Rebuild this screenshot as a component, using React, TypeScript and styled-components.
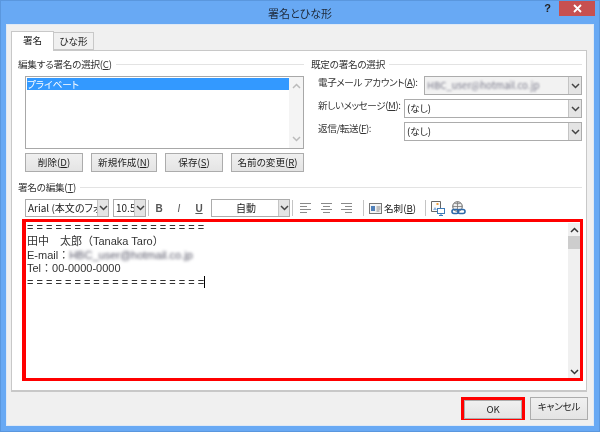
import styled, { createGlobalStyle } from "styled-components";

const UI_FONT = `"Noto Sans CJK JP", "Liberation Sans", sans-serif`;

const GlobalStyle = createGlobalStyle`
  html, body {
    margin: 0;
    padding: 0;
    background: #68a9f4;
  }
  * {
    box-sizing: border-box;
  }
`;

function Chevron({ dir = "down", color = "#444" }: { dir?: "up" | "down"; color?: string }) {
  return (
    <svg width="9" height="6" viewBox="0 0 9 6">
      <path
        d={dir === "down" ? "M1 1l3.5 3.5L8 1" : "M1 5l3.5-3.5L8 5"}
        fill="none"
        stroke={color}
        strokeWidth="1.5"
      />
    </svg>
  );
}

function Combo({
  value,
  width,
  blurred,
  center,
  tight,
}: {
  value: string;
  width: number;
  blurred?: boolean;
  center?: boolean;
  tight?: boolean;
}) {
  return (
    <ComboBox $width={width} $tight={tight} $disabled={blurred}>
      <ComboValue $blurred={blurred} $center={center} $tight={tight}>
        {value}
      </ComboValue>
      <ComboArrow $tight={tight}>
        <Chevron />
      </ComboArrow>
    </ComboBox>
  );
}

function AlignIcon({ kind }: { kind: "left" | "center" | "right" }) {
  const widths = [11, 7, 11, 7];
  return (
    <svg width="11" height="10" viewBox="0 0 11 10">
      {widths.map((w, i) => (
        <rect
          key={i}
          x={kind === "left" ? 0 : kind === "center" ? (11 - w) / 2 : 11 - w}
          y={i * 3}
          width={w}
          height="1"
          fill="#8a8a8a"
        />
      ))}
    </svg>
  );
}

function App() {
  return (
    <>
      <GlobalStyle />
      <Frame>
        <TitleBar>
          <Title>署名とひな形</Title>
          <HelpButton>?</HelpButton>
          <CloseButton>
            <svg width="9" height="9" viewBox="0 0 9 9">
              <path d="M1 1l7 7M8 1L1 8" stroke="#fff" strokeWidth="1.8" />
            </svg>
          </CloseButton>
        </TitleBar>

        <Client>
          <TabRow>
            <Tab $active>署名</Tab>
            <Tab>ひな形</Tab>
          </TabRow>

          <Page>
            <TopRow>
              <LeftGroup>
                <GroupLabel>
                  <span>
                    編集する署名の選択(<u>C</u>)
                  </span>
                </GroupLabel>
                <ListBox>
                  <ListItems>
                    <ListItem>プライベート</ListItem>
                  </ListItems>
                  <ListScroll>
                    <Chevron dir="up" color="#bbb" />
                    <Chevron color="#bbb" />
                  </ListScroll>
                </ListBox>
                <ButtonRow>
                  <PushButton $width={58}>
                    削除(<u>D</u>)
                  </PushButton>
                  <PushButton $width={66}>
                    新規作成(<u>N</u>)
                  </PushButton>
                  <PushButton $width={58}>
                    保存(<u>S</u>)
                  </PushButton>
                  <PushButton $width={73}>
                    名前の変更(<u>R</u>)
                  </PushButton>
                </ButtonRow>
              </LeftGroup>

              <RightGroup>
                <GroupLabel>
                  <span>既定の署名の選択</span>
                </GroupLabel>
                <FieldRows>
                  <FieldRow>
                    <FieldLabel>
                      電子メール アカウント(<u>A</u>):
                    </FieldLabel>
                    <Combo value="HBC_user@hotmail.co.jp" width={158} blurred />
                  </FieldRow>
                  <FieldRow>
                    <FieldLabel>
                      新しいメッセージ(<u>M</u>):
                    </FieldLabel>
                    <Combo value="(なし)" width={178} />
                  </FieldRow>
                  <FieldRow>
                    <FieldLabel>
                      返信/転送(<u>F</u>):
                    </FieldLabel>
                    <Combo value="(なし)" width={178} />
                  </FieldRow>
                </FieldRows>
              </RightGroup>
            </TopRow>

            <EditSection>
              <GroupLabel>
                <span>
                  署名の編集(<u>T</u>)
                </span>
              </GroupLabel>
              <Toolbar>
                <Combo value="Arial (本文のフォント" width={84} tight />
                <Combo value="10.5" width={33} tight />
                <Separator />
                <FormatButton>B</FormatButton>
                <FormatButton $italic>I</FormatButton>
                <FormatButton $underline>U</FormatButton>
                <Combo value="自動" width={79} center tight />
                <Separator />
                <AlignGroup>
                  <AlignIcon kind="left" />
                  <AlignIcon kind="center" />
                  <AlignIcon kind="right" />
                </AlignGroup>
                <Separator />
                <CardButton>
                  <svg width="13" height="11" viewBox="0 0 13 11">
                    <rect x="0.5" y="0.5" width="12" height="10" fill="#f4f4f4" stroke="#777" />
                    <rect x="2" y="3" width="4" height="5" fill="#4f7fb8" />
                    <path d="M7.5 4h4M7.5 6h4M7.5 8h3" stroke="#888" />
                  </svg>
                  <span>
                    名刺(<u>B</u>)
                  </span>
                </CardButton>
                <Separator />
                <IconSlot>
                  <svg width="14" height="15" viewBox="0 0 14 15">
                    <path d="M0.5 0.5h9v10h-9z" fill="#fbfbfb" stroke="#666" />
                    <rect x="5.500" y="2" width="2" height="2" fill="#f0a040" />
                    <path d="M2 9l2-3 2 3z" fill="#8db2dc" />
                    <rect x="6.500" y="7.500" width="7" height="5" fill="#fff" stroke="#3d7ab8" />
                    <path d="M8 14.500h4M10 12.500v2" stroke="#3d7ab8" />
                  </svg>
                </IconSlot>
                <IconSlot>
                  <svg width="15" height="14" viewBox="0 0 15 14">
                    <circle cx="6.500" cy="5.500" r="4.800" fill="#eee" stroke="#666" />
                    <path
                      d="M1.700 5.500h9.600M6.500 .7v9.600M3.500 2c1.800 1 4.200 1 6 0M3.500 9c1.800-1 4.200-1 6 0"
                      stroke="#777"
                      strokeWidth=".8"
                      fill="none"
                    />
                    <rect x="1" y="8.500" width="6.500" height="4" rx="2" fill="none" stroke="#2f69a8" strokeWidth="1.600" />
                    <rect x="7" y="8.500" width="7" height="4" rx="2" fill="none" stroke="#2f69a8" strokeWidth="1.600" />
                  </svg>
                </IconSlot>
              </Toolbar>

              <Editor>
                <EditorText>
                  <Line>= = = = = = = = = = = = = = = = = = =</Line>
                  <Line>田中　太郎（Tanaka Taro）</Line>
                  <Line>
                    E-mail：<BlurredText>HBC_user@hotmail.co.jp</BlurredText>
                  </Line>
                  <Line>Tel：00-0000-0000</Line>
                  <Line>
                    = = = = = = = = = = = = = = = = = = =<Caret />
                  </Line>
                </EditorText>
                <EditorScroll>
                  <ScrollEnd>
                    <Chevron dir="up" color="#333" />
                  </ScrollEnd>
                  <ScrollThumb />
                  <ScrollTrack />
                  <ScrollEnd>
                    <Chevron color="#333" />
                  </ScrollEnd>
                </EditorScroll>
              </Editor>
            </EditSection>
          </Page>

          <Footer>
            <OkHighlight>
              <DialogButton>OK</DialogButton>
            </OkHighlight>
            <DialogButton>キャンセル</DialogButton>
          </Footer>
        </Client>
      </Frame>
    </>
  );
}

export default App;

const Frame = styled.div`
  width: 600px;
  height: 432px;
  background: #68a9f4;
  border: 1px solid #5a97de;
  padding: 0 5px 5px;
  display: flex;
  flex-direction: column;
  font-family: ${UI_FONT};
  font-feature-settings: "palt";
  font-size: 9.6px;
  color: #222;
  overflow: hidden;
  filter: blur(0.3px);
`;

const TitleBar = styled.div`
  position: relative;
  height: 23px;
  flex: none;
`;

const Title = styled.div`
  position: absolute;
  left: 0;
  right: 0;
  top: 3px;
  text-align: center;
  font-size: 11px;
  line-height: 18px;
  color: #1e2a3a;
`;

const HelpButton = styled.div`
  position: absolute;
  right: 43px;
  top: 1px;
  font: bold 11px "Liberation Sans", sans-serif;
  color: #222;
`;

const CloseButton = styled.div`
  position: absolute;
  right: -1px;
  top: 0;
  width: 36px;
  height: 15px;
  background: #c75050;
  display: flex;
  align-items: center;
  justify-content: center;
`;

const Client = styled.div`
  flex: 1;
  background: #f0f0f0;
  border: 1px solid #dfe9f5;
  padding: 6px 5px 0 4px;
  display: flex;
  flex-direction: column;
`;

const TabRow = styled.div`
  display: flex;
  height: 19px;
  position: relative;
  z-index: 1;
`;

const Tab = styled.div<{ $active?: boolean }>`
  height: ${(p) => (p.$active ? "20px" : "18px")};
  margin-top: ${(p) => (p.$active ? "0" : "1px")};
  width: ${(p) => (p.$active ? "43px" : "40px")};
  background: ${(p) => (p.$active ? "#fff" : "#f0f0f0")};
  border: 1px solid #c8c8c8;
  border-bottom: ${(p) => (p.$active ? "none" : "1px solid #c8c8c8")};
  border-left-width: ${(p) => (p.$active ? "1px" : "0")};
  font-size: 9.6px;
  line-height: 17px;
  text-align: center;
`;

const Page = styled.div`
  width: 576px;
  height: 342px;
  background: #fff;
  border: 1px solid #c8c8c8;
  border-bottom: 2px solid #c8c8c8;
  padding: 6px 4px 0 6px;
`;

const TopRow = styled.div`
  display: flex;
  gap: 7px;
`;

const LeftGroup = styled.div`
  width: 286px;
  flex: none;
`;

const RightGroup = styled.div`
  flex: 1;
  min-width: 0;
`;

const GroupLabel = styled.div`
  display: flex;
  align-items: center;
  gap: 4px;
  height: 14px;
  line-height: 14px;
  letter-spacing: -0.25px;
  white-space: nowrap;
  color: #333;

  &::after {
    content: "";
    flex: 1;
    height: 1px;
    background: #e3e3e3;
  }
`;

const ListBox = styled.div`
  margin: 5px 0 0 7px;
  height: 73px;
  border: 1px solid #a8a8a8;
  display: flex;
`;

const ListItems = styled.div`
  flex: 1;
  padding: 1px 0 0 1px;
`;

const ListItem = styled.div`
  height: 12px;
  background: #3399ff;
  color: #fff;
  line-height: 12px;
`;

const ListScroll = styled.div`
  width: 14px;
  background: #f4f4f4;
  padding: 6px 0;
  display: flex;
  flex-direction: column;
  justify-content: space-between;
  align-items: center;
`;

const ButtonRow = styled.div`
  display: flex;
  justify-content: space-between;
  margin: 4px 0 0 7px;
`;

const PushButton = styled.div<{ $width: number }>`
  width: ${(p) => p.$width}px;
  height: 19px;
  background: linear-gradient(#f0f0f0, #e4e4e4);
  border: 1px solid #acacac;
  text-align: center;
  line-height: 17px;
  white-space: nowrap;
`;

const FieldRows = styled.div`
  margin-top: 5px;
  padding-left: 7px;
  display: flex;
  flex-direction: column;
  gap: 4px;
`;

const FieldRow = styled.div`
  display: flex;
  justify-content: space-between;
  height: 19px;
`;

const FieldLabel = styled.div`
  line-height: 13px;
  letter-spacing: -0.4px;
  white-space: nowrap;
  color: #333;
`;

const ComboBox = styled.div<{ $width: number; $tight?: boolean; $disabled?: boolean }>`
  width: ${(p) => p.$width}px;
  flex: none;
  height: ${(p) => (p.$tight ? "18px" : "19px")};
  background: ${(p) => (p.$disabled ? "#f2f2f2" : "#fff")};
  border: 1px solid #acacac;
  display: flex;
  overflow: hidden;
`;

const ComboValue = styled.div<{ $blurred?: boolean; $center?: boolean; $tight?: boolean }>`
  flex: 1;
  min-width: 0;
  overflow: hidden;
  white-space: nowrap;
  padding-left: 2px;
  font-size: ${(p) => (p.$tight ? "10px" : "9.6px")};
  line-height: 16px;
  text-align: ${(p) => (p.$center ? "center" : "left")};
  ${(p) => p.$blurred && "filter: blur(1.2px); color: #778;"}
`;

const ComboArrow = styled.div<{ $tight?: boolean }>`
  width: ${(p) => (p.$tight ? "11px" : "13px")};
  flex: none;
  background: #e4e4e4;
  border-left: 1px solid #c4c4c4;
  display: flex;
  align-items: center;
  justify-content: center;
`;

const EditSection = styled.div`
  margin-top: 8px;
`;

const Toolbar = styled.div`
  height: 18px;
  margin: 5px 0 0 7px;
  display: flex;
  align-items: center;
  gap: 4px;
`;

const Separator = styled.div`
  width: 1px;
  height: 16px;
  background: #c4c4c4;
  margin: 0 -2px;
  flex: none;
`;

const FormatButton = styled.div<{ $italic?: boolean; $underline?: boolean }>`
  width: 16px;
  flex: none;
  text-align: center;
  font: ${(p) => (p.$italic ? "italic normal" : "normal bold")} 10px "Liberation Sans", sans-serif;
  color: #555;
  text-decoration: ${(p) => (p.$underline ? "underline" : "none")};
`;

const AlignGroup = styled.div`
  width: 66px;
  display: flex;
  justify-content: space-between;
  padding: 0 9px 0 5px;
  flex: none;
`;

const CardButton = styled.div`
  display: flex;
  align-items: center;
  gap: 2px;
  width: 57px;
  padding-left: 3px;
  flex: none;
  white-space: nowrap;
`;

const IconSlot = styled.div`
  width: 17px;
  display: flex;
  justify-content: flex-end;
  flex: none;
`;

const Editor = styled.div`
  height: 162px;
  margin: 2px 0 0 4px;
  width: 561px;
  border: 3px solid #f00;
  border-left-width: 4px;
  background: #fff;
  display: flex;
`;

const EditorText = styled.div`
  flex: 1;
  margin-top: -1px;
  padding-left: 1px;
  font: 11px/13.8px "Liberation Sans", "Noto Sans CJK JP", sans-serif;
  font-feature-settings: normal;
  color: #333;
`;

const Line = styled.div`
  white-space: nowrap;
`;

const BlurredText = styled.span`
  filter: blur(1.4px);
  display: inline-block;
  color: #556;
`;

const Caret = styled.span`
  display: inline-block;
  width: 1px;
  height: 12px;
  background: #000;
  vertical-align: -2px;
`;

const EditorScroll = styled.div`
  width: 12px;
  background: #f0f0f0;
  margin: 1px 0 0;
  display: flex;
  flex-direction: column;
`;

const ScrollEnd = styled.div`
  height: 13px;
  flex: none;
  display: flex;
  align-items: center;
  justify-content: center;
`;

const ScrollThumb = styled.div`
  height: 13px;
  flex: none;
  background: #cdcdcd;
`;

const ScrollTrack = styled.div`
  flex: 1;
`;

const Footer = styled.div`
  display: flex;
  justify-content: flex-end;
  align-items: center;
  gap: 5px;
  padding-top: 5px;
`;

const OkHighlight = styled.div`
  width: 64px;
  height: 23px;
  border: 3px solid #f00;
  display: flex;
`;

const DialogButton = styled.div`
  width: 58px;
  height: 100%;
  min-height: 19px;
  background: linear-gradient(#f0f0f0, #e4e4e4);
  border: 1px solid #acacac;
  text-align: center;
  line-height: 17px;
  letter-spacing: -0.2px;
  white-space: nowrap;
`;
